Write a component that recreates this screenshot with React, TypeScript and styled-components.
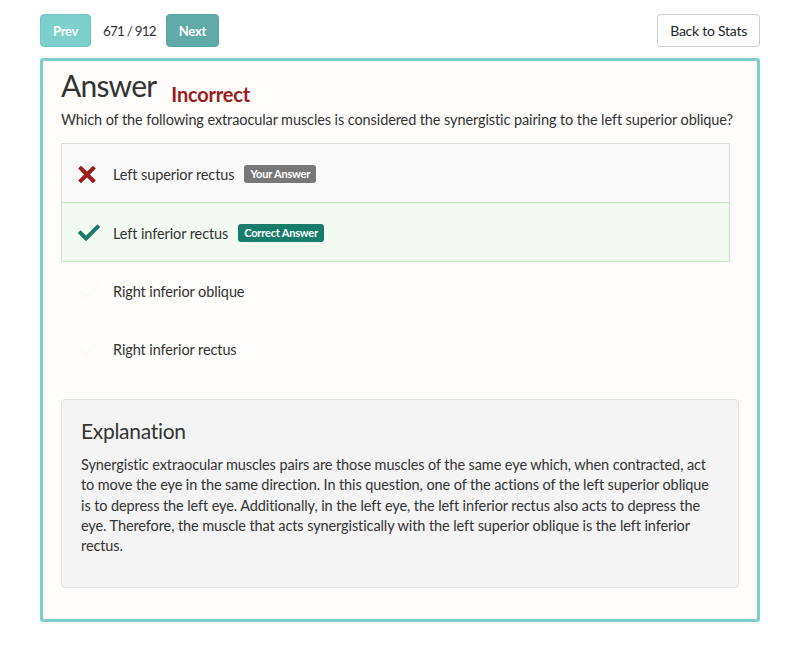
import React from "react";
import styled, { createGlobalStyle } from "styled-components";

const Global = createGlobalStyle`
  html, body { margin: 0; padding: 0; background: #ffffff; }
  body { font-family: Lato, "Open Sans", sans-serif; color: #333; -webkit-font-smoothing: antialiased; letter-spacing: -0.1px; }
  * { box-sizing: border-box; }
`;

const Page = styled.div`
  width: 720px;
  margin: 0 auto;
  padding-top: 14px;
`;

const TopBar = styled.div`
  display: flex;
  align-items: center;
  justify-content: space-between;
  height: 33px;
  margin-bottom: 11px;
`;

const Pager = styled.div`
  display: flex;
  align-items: center;
`;

const NavButton = styled.button<{ $dark?: boolean }>`
  height: 33px;
  padding: 0 12px;
  border: 1px solid ${(p) => (p.$dark ? "#55a4a1" : "#6fc6c3")};
  border-radius: 4px;
  background: ${(p) => (p.$dark ? "#60aaa7" : "#7dcfcc")};
  color: #fff;
  font-family: Lato, sans-serif;
  font-weight: 700;
  font-size: 13px;
  letter-spacing: -0.3px;
`;

const Count = styled.span`
  font-size: 13.5px;
  letter-spacing: -0.8px;
  color: #333;
  margin: 0 10px 0 12px;
`;

const BackButton = styled.button`
  height: 33px;
  padding: 0 12px;
  border: 1px solid #ccc;
  border-radius: 4px;
  background: #fff;
  color: #222;
  font-family: Lato, sans-serif;
  font-size: 14px;
  letter-spacing: -0.25px;
`;

const Card = styled.div`
  border: 3px solid #7dd0cd;
  border-radius: 3px;
  background: #fefdfb;
  padding: 6px 18px 31px 18px;
`;

const TitleRow = styled.div`
  display: flex;
  align-items: flex-end;
  gap: 15px;
`;

const Title = styled.h1`
  margin: 0;
  font-size: 30px;
  font-weight: 400;
  color: #333;
  line-height: 36px;
  letter-spacing: -0.8px;
`;

const Verdict = styled.span`
  font-size: 20px;
  font-weight: 700;
  color: #9b1c1c;
  line-height: 24px;
  margin-bottom: -3px;
  letter-spacing: -0.2px;
`;

const Question = styled.p`
  margin: 7px 0 13px 0;
  font-size: 14.5px;
  line-height: 20px;
  color: #333;
`;

const Options = styled.div`
  display: flex;
  flex-direction: column;
  margin-right: 9px;
`;

const Row = styled.div<{ $kind: "wrong" | "right" | "plain" }>`
  display: flex;
  align-items: center;
  height: ${(p) => (p.$kind === "plain" ? "59px" : "60px")};
  padding: 2px 0 0 16px;
  border: 1px solid
    ${(p) => (p.$kind === "wrong" ? "#dddddd" : p.$kind === "right" ? "#c5e4bf" : "transparent")};
  background: ${(p) => (p.$kind === "wrong" ? "#f9f9f9" : p.$kind === "right" ? "#f3faf2" : "transparent")};
  & + & {
    margin-top: -1px;
  }
  font-size: 14.5px;
  color: #333;
`;

const IconBox = styled.span`
  width: 35px;
  display: flex;
  align-items: center;
`;

const Badge = styled.span<{ $color: string }>`
  margin-left: 10px;
  padding: 2px 6px;
  border-radius: 3px;
  background: ${(p) => p.$color};
  color: #fff;
  font-size: 11px;
  font-weight: 700;
  line-height: 14px;
  letter-spacing: -0.2px;
`;

const Explanation = styled.div`
  margin-top: 21px;
  background: #f4f4f4;
  border: 1px solid #e3e3e3;
  border-radius: 4px;
  padding: 16px 21px 31px 19px;
`;

const ExpTitle = styled.h2`
  margin: 0 0 9px 0;
  font-size: 21px;
  font-weight: 400;
  line-height: 30px;
  letter-spacing: -0.3px;
  color: #333;
`;

const ExpText = styled.p`
  margin: 0;
  font-size: 14.5px;
  line-height: 20.25px;
  color: #333;
`;

const Cross = () => (
  <svg width="18" height="17" viewBox="0 0 18 17">
    <path d="M3 2.5 L15 14.5 M15 2.5 L3 14.5" stroke="#9b1c1c" strokeWidth="4" strokeLinecap="square" />
  </svg>
);

const Check = ({ color }: { color: string }) => (
  <svg width="22" height="18" viewBox="0 0 22 18">
    <path d="M2.5 9 L8 14.5 L19.5 3" stroke={color} strokeWidth="4" fill="none" strokeLinecap="square" />
  </svg>
);

export default function App() {
  return (
    <>
      <Global />
      <Page>
        <TopBar>
          <Pager>
            <NavButton>Prev</NavButton>
            <Count>671 / 912</Count>
            <NavButton $dark>Next</NavButton>
          </Pager>
          <BackButton>Back to Stats</BackButton>
        </TopBar>
        <Card>
          <TitleRow>
            <Title>Answer</Title>
            <Verdict>Incorrect</Verdict>
          </TitleRow>
          <Question>
            Which of the following extraocular muscles is considered the synergistic pairing to the left superior oblique?
          </Question>
          <Options>
            <Row $kind="wrong">
              <IconBox><Cross /></IconBox>
              Left superior rectus
              <Badge $color="#777777">Your Answer</Badge>
            </Row>
            <Row $kind="right">
              <IconBox><Check color="#177c6a" /></IconBox>
              Left inferior rectus
              <Badge $color="#177c6a">Correct Answer</Badge>
            </Row>
            <Row $kind="plain">
              <IconBox><Check color="#fcfbf9" /></IconBox>
              Right inferior oblique
            </Row>
            <Row $kind="plain">
              <IconBox><Check color="#fcfbf9" /></IconBox>
              Right inferior rectus
            </Row>
          </Options>
          <Explanation>
            <ExpTitle>Explanation</ExpTitle>
            <ExpText>
              Synergistic extraocular muscles pairs are those muscles of the same eye which, when contracted, act to move the eye in the same direction. In this question, one of the actions of the left superior oblique is to depress the left eye. Additionally, in the left eye, the left inferior rectus also acts to depress the eye. Therefore, the muscle that acts synergistically with the left superior oblique is the left inferior rectus.
            </ExpText>
          </Explanation>
        </Card>
      </Page>
    </>
  );
}
